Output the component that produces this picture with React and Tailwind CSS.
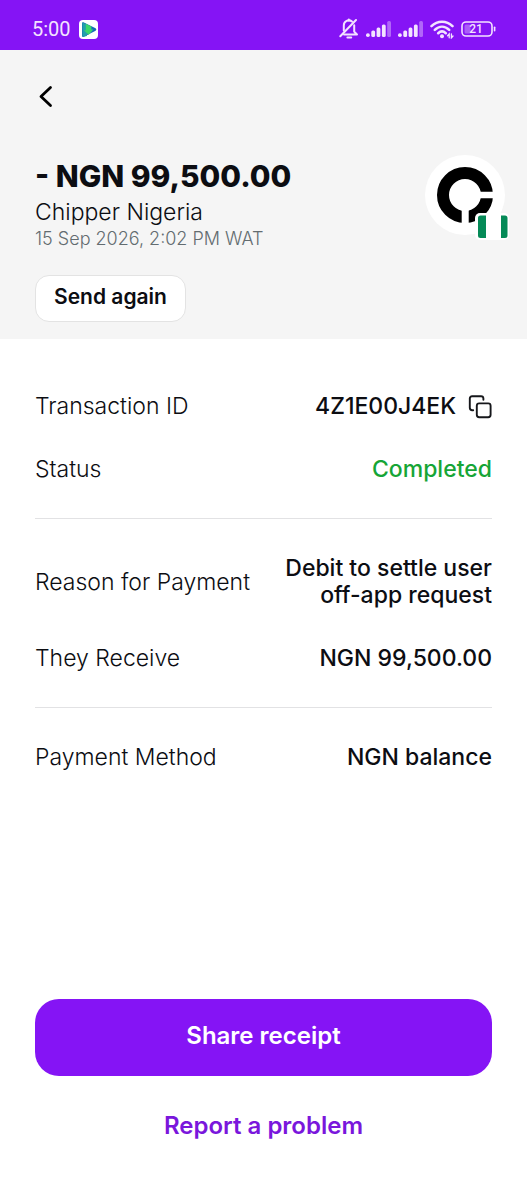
import React from 'react';

function BellOffIcon() {
  return (
    <svg className="h-[22px] w-5" viewBox="0 0 20 22" fill="none" stroke="#f3e3ff" strokeWidth="2" strokeLinecap="round" strokeLinejoin="round" aria-hidden="true">
      <path d="M13 3.6A5 5 0 0 0 4.8 7.6V12.6" />
      <path d="M5 16.5H18L15.2 13.6V7.2" />
      <path d="M1.3 18.2L17 2" />
      <path d="M9.8 2.4V1.4" />
      <path d="M8.4 19.6H12.2" />
    </svg>
  );
}

function SignalIcon() {
  return (
    <svg className="h-4 w-[25px]" viewBox="0 0 25 16" fill="#f3e3ff" aria-hidden="true">
      <rect x="0" y="12.2" width="3.8" height="3.8" rx="1.8" />
      <rect x="5.3" y="9.4" width="3.8" height="6.6" rx="1.5" />
      <rect x="10.6" y="6.6" width="3.8" height="9.4" rx="1.5" />
      <rect x="15.9" y="3.4" width="3.8" height="12.6" rx="1.5" />
      <rect x="21.2" y="0" width="3.8" height="16" rx="1.5" opacity="0.4" />
    </svg>
  );
}

function WifiIcon() {
  return (
    <svg className="h-[19px] w-6" viewBox="0 0 24 19" fill="none" stroke="#f3e3ff" strokeWidth="2.6" strokeLinecap="round" aria-hidden="true">
      <path d="M1.5 6.1C7.5.3 16.5.3 22.5 6.1" />
      <path d="M4.8 9.9C9.2 5.6 14.8 5.6 19.2 9.9" />
      <path d="M8.2 13.2C10.6 11 13.4 11 15.8 13.2" />
      <circle cx="12" cy="16.3" r="2" fill="#f3e3ff" stroke="none" />
      <path d="M19.2 17.8V14L17.6 15.8M21.4 14V17.8L23 16" strokeWidth="1.3" />
    </svg>
  );
}

function BatteryIcon() {
  return (
    <svg className="h-4 w-[35px]" viewBox="0 0 35 16" aria-hidden="true">
      <rect x="3.5" y="3.5" width="6" height="9" rx="1.5" fill="#f3e3ff" opacity="0.35" />
      <rect x="1" y="1" width="30" height="14" rx="4" fill="none" stroke="#f3e3ff" strokeWidth="1.6" />
      <path d="M33.6 6.2V9.8" stroke="#f3e3ff" strokeWidth="1.6" strokeLinecap="round" />
      <text x="15" y="12.4" textAnchor="middle" fontFamily="Roboto, sans-serif" fontSize="12" fontWeight="500" fill="#f3e3ff">21</text>
    </svg>
  );
}

function AppBadge() {
  return (
    <svg className="h-[19px] w-[19px]" viewBox="0 0 19 19" aria-hidden="true">
      <rect width="19" height="19" rx="4" fill="#fff" />
      <path d="M4.4 2.2L16.6 8.2Q18.2 9.5 16.6 10.8L4.4 16.9Q3 17.2 3 15.6V3.4Q3 1.9 4.4 2.2Z" fill="#1668b8" />
      <path d="M3.4 2.6L8 4.3V16L3.4 17Z" fill="#229fac" />
      <path d="M6.8 3.8L12.4 6.4V9.6H14.4L9.6 15L5 10.2H6.8Z" fill="#3bd76b" />
    </svg>
  );
}

function StatusBar() {
  return (
    <div className="flex h-[50px] items-center justify-between bg-[#8514f5] pt-2 pr-[31px] pl-8">
      <div className="flex items-center gap-2">
        <span className="font-[Roboto,sans-serif] text-[20px] leading-6 text-[#f3e3ff]">5:00</span>
        <AppBadge />
      </div>
      <div className="flex items-center gap-[7px]">
        <BellOffIcon />
        <SignalIcon />
        <SignalIcon />
        <WifiIcon />
        <BatteryIcon />
      </div>
    </div>
  );
}

function Avatar() {
  return (
    <div className="relative -mr-[13px] h-20 w-20 shrink-0 rounded-full bg-white">
      <svg className="h-20 w-20" viewBox="0 0 80 80" role="img" aria-label="Chipper">
        <circle cx="40" cy="40" r="22" fill="none" stroke="#000" strokeWidth="12" />
        <path d="M40 36.7H70V43.3H40ZM36.7 40H43.7V70H36.7Z" fill="#fff" />
      </svg>
      <svg className="absolute -right-1 -bottom-[5px] h-[27px] w-[34px]" viewBox="0 0 34 27" role="img" aria-label="Nigeria">
        <rect width="34" height="27" rx="5" fill="#fff" />
        <path d="M5.5 2.5H11V25H5.5Q3 25 3 22.5V5Q3 2.5 5.5 2.5ZM26 2.5H30Q32.5 2.5 32.5 5V22.5Q32.5 25 30 25H26Z" fill="#058a57" />
      </svg>
    </div>
  );
}

function CopyIcon() {
  return (
    <svg className="h-6 w-6" viewBox="0 0 24 24" fill="none" stroke="#16171b" strokeWidth="1.9" strokeLinecap="round" strokeLinejoin="round" aria-hidden="true">
      <rect x="8.8" y="8.4" width="13.8" height="13.8" rx="2.4" />
      <path d="M5.2 15.2H4.2Q1.8 15.2 1.8 12.8V3.6Q1.8 1.2 4.2 1.2H13Q15.4 1.2 15.4 3.6V4.8" />
    </svg>
  );
}

function Row({ label, children }) {
  return (
    <div className="flex items-center justify-between gap-4">
      <dt className="text-[23px] leading-[27px] font-light">{label}</dt>
      <dd className="text-right text-[23px] leading-[27px] font-medium">{children}</dd>
    </div>
  );
}

export default function App() {
  return (
    <div className="flex min-h-screen flex-col bg-white font-[Inter,sans-serif] text-[#0c0d12]">
      <StatusBar />
      <header className="bg-[#f5f5f5] px-[35px] pt-[34px] pb-[17px]">
        <button type="button" aria-label="Back" className="block">
          <svg className="h-6 w-5" viewBox="0 0 20 24" fill="none" stroke="#000" strokeWidth="2.8" strokeLinecap="round" strokeLinejoin="round" aria-hidden="true">
            <path d="M15.5 3.5L6 12.5L15.5 21.5" />
          </svg>
        </button>
        <div className="mt-[47px] flex items-start justify-between">
          <div className="pt-[3px]">
            <h1 className="text-[30px] leading-9 font-extrabold">- NGN 99,500.00</h1>
            <p className="text-[23px] leading-9 font-light">Chipper Nigeria</p>
            <p className="text-[18px] leading-[18px] font-light text-[#636c70]">15 Sep 2026, 2:02 PM WAT</p>
          </div>
          <Avatar />
        </div>
        <button type="button" className="mt-[27px] h-[47px] rounded-[14px] border border-[#e3e3e3] bg-white px-[18px] pb-1 text-[21px] leading-6 font-semibold">
          Send again
        </button>
      </header>
      <main className="flex grow flex-col px-[35px] pt-[54px] pb-[61px]">
        <dl className="flex flex-col gap-9 border-b border-[#e2e2e4] pb-[35px]">
          <Row label="Transaction ID">
            <span className="flex items-center gap-3">
              4Z1E00J4EK
              <button type="button" aria-label="Copy transaction ID"><CopyIcon /></button>
            </span>
          </Row>
          <Row label="Status"><span className="text-[#16a536]">Completed</span></Row>
        </dl>
        <dl className="flex flex-col gap-9 border-b border-[#e2e2e4] pt-9 pb-[35px]">
          <Row label="Reason for Payment">Debit to settle user<br />off-app request</Row>
          <Row label="They Receive">NGN 99,500.00</Row>
        </dl>
        <dl className="pt-9">
          <Row label="Payment Method">NGN balance</Row>
        </dl>
        <div className="mt-auto flex flex-col gap-9 pt-10">
          <button type="button" className="h-[77px] rounded-3xl bg-[#8514f5] pb-1 text-[24px] leading-[27px] font-semibold text-white">
            Share receipt
          </button>
          <button type="button" className="text-[24px] leading-[27px] font-semibold text-[#7a16dc]">
            Report a problem
          </button>
        </div>
      </main>
    </div>
  );
}
